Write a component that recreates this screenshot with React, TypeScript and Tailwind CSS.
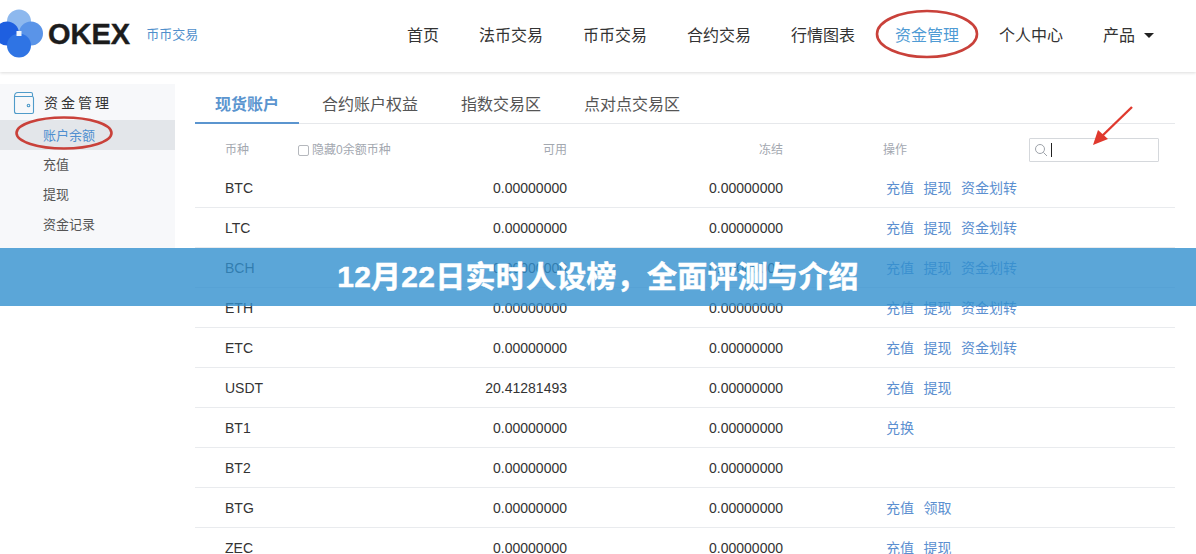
const FONT = '"Liberation Sans","Noto Sans CJK SC",sans-serif';

const nav = ["首页", "法币交易", "币币交易", "合约交易", "行情图表", "资金管理", "个人中心"];

const rows: [string, string, string[]][] = [
  ["BTC", "0.00000000", ["充值", "提现", "资金划转"]],
  ["LTC", "0.00000000", ["充值", "提现", "资金划转"]],
  ["BCH", "0.00000000", ["充值", "提现", "资金划转"]],
  ["ETH", "0.00000000", ["充值", "提现", "资金划转"]],
  ["ETC", "0.00000000", ["充值", "提现", "资金划转"]],
  ["USDT", "20.41281493", ["充值", "提现"]],
  ["BT1", "0.00000000", ["兑换"]],
  ["BT2", "0.00000000", []],
  ["BTG", "0.00000000", ["充值", "领取"]],
  ["ZEC", "0.00000000", ["充值", "提现"]],
];

function Logo() {
  return (
    <svg width="44" height="50" viewBox="0 0 44 50" className="-mt-[4px] shrink-0">
      <circle cx="19" cy="12.5" r="12" fill="#8db8ee" />
      <circle cx="31" cy="24.5" r="12" fill="#5a94e8" />
      <circle cx="7" cy="24.5" r="12" fill="#1e5fe0" />
      <circle cx="19" cy="36.5" r="12" fill="#2f74e4" />
      <rect x="16.5" y="22" width="5" height="5" fill="#eef4fd" />
    </svg>
  );
}

function Wallet() {
  return (
    <svg width="22" height="24" viewBox="0 0 22 24" fill="none" stroke="#4f9bc9" strokeWidth="1.1">
      <path d="M1.5 5.5 V20.5 a2 2 0 0 0 2 2 H19 a1.5 1.5 0 0 0 1.5-1.5 V7 a1.5 1.5 0 0 0-1.5-1.5 H1.5Z" />
      <path d="M1.5 5.5 C1.5 3 2.5 1.5 5 1.5 H18 a1.5 1.5 0 0 1 1.5 1.5 V5.5" />
      <circle cx="15.5" cy="14.5" r="1.3" />
    </svg>
  );
}

function Row({ row }: { row: [string, string, string[]] }) {
  return (
    <div className="flex h-10 items-center border-b border-[#e9ebee] pt-[1px] text-[14px] text-[#333]">
      <div className="w-[30px]" />
      <div className="w-[100px]">{row[0]}</div>
      <div className="w-[242px] text-right">{row[1]}</div>
      <div className="w-[216px] text-right">0.00000000</div>
      <div className="ml-[103px] flex gap-[9.5px] text-[#5b8fd0]">
        {row[2].map((a) => (
          <span key={a}>{a}</span>
        ))}
      </div>
    </div>
  );
}

export default function App() {
  return (
    <div className="relative h-[554px] w-[1196px] overflow-hidden bg-white" style={{ fontFamily: FONT }}>
      <header className="flex h-[72px] items-center shadow-[0_1px_3px_rgba(0,0,0,0.14)]">
        <div className="flex w-[407px] shrink-0 items-center">
          <Logo />
          <span className="mb-[2px] ml-[4px] text-[29px] font-bold tracking-[0px] text-[#1c1c1c] [-webkit-text-stroke:0.4px_#1c1c1c]">OKEX</span>
          <span className="mb-[2px] ml-[16px] text-[13px] text-[#4f8fcb]">币币交易</span>
        </div>
        <nav className="flex items-center gap-[40px] pb-[1px] text-[16px] text-[#333]">
          {nav.map((n) => (
            <span key={n} className={n === "资金管理" ? "text-[#4f9bd4]" : ""}>
              {n}
            </span>
          ))}
          <span className="flex items-center gap-[9px]">
            产品
            <span className="h-0 w-0 border-x-[5px] border-t-[5px] border-x-transparent border-t-[#222]" />
          </span>
        </nav>
      </header>

      <div className="mt-[12px] flex">
        <aside className="h-[164px] w-[175px] shrink-0 bg-[#f7f8fa]">
          <div className="flex h-[36px] items-center gap-[9px] pl-[13px] pt-[2px] text-[14px] tracking-[3px] text-[#333]">
            <Wallet />
            资金管理
          </div>
          <div className="flex h-[30px] items-center bg-[#e3e6ea] pl-[43px] pt-[1px] text-[13px] text-[#4f8fd0]">账户余额</div>
          {["充值", "提现", "资金记录"].map((s) => (
            <div key={s} className="flex h-[30px] items-center pl-[43px] text-[13px] text-[#555]">
              {s}
            </div>
          ))}
        </aside>

        <main className="ml-[20px] w-[980px]">
          <div className="flex h-[40px] items-end border-b border-[#e6e8eb] text-[16px] text-[#555]">
            <div className="-mb-px flex h-[40px] w-[104px] items-center justify-center border-b-2 border-[#5b95cf] pt-[4px] font-bold text-[#5b95cf]">
              现货账户
            </div>
            <div className="flex h-[40px] items-center gap-[43px] pl-[23px] pt-[4px]">
              <span>合约账户权益</span>
              <span>指数交易区</span>
              <span>点对点交易区</span>
            </div>
          </div>

          <div className="relative flex h-[44px] items-center pt-[8px] text-[12px] text-[#a3a8b0]">
            <div className="w-[30px]" />
            <div className="w-[73px]">币种</div>
            <div className="flex w-[170px] items-center gap-[3px]">
              <span className="h-[11px] w-[11px] rounded-[2px] border border-[#b5b8bd]" />
              隐藏0余额币种
            </div>
            <div className="w-[99px] text-right">可用</div>
            <div className="w-[216px] text-right">冻结</div>
            <div className="ml-[100px]">操作</div>
            <div className="ml-[122px] flex h-[24px] w-[130px] items-center gap-[3px] rounded-[1px] border border-[#d5d8dc] pl-[4px]">
              <svg width="14" height="14" viewBox="0 0 14 14" fill="none" stroke="#9ea3aa" strokeWidth="1">
                <circle cx="6" cy="6" r="4.5" />
                <path d="M9.4 9.4 L13 13" />
              </svg>
              <span className="h-[14px] w-px bg-[#222]" />
            </div>
          </div>

          {rows.map((r) => (
            <Row key={r[0]} row={r} />
          ))}
        </main>
      </div>

      <svg className="absolute left-0 top-0" width="1196" height="200" viewBox="0 0 1196 200" fill="none">
        <ellipse cx="927" cy="34" rx="50" ry="23" stroke="#c9413a" strokeWidth="2.6" />
        <ellipse cx="64" cy="133" rx="47.5" ry="15.5" stroke="#c9413a" strokeWidth="2.6" />
        <path d="M1132 107 L1100 138" stroke="#e0392e" strokeWidth="2.4" />
        <path d="M1093 145 L1098 130 L1108 139Z" fill="#e0392e" />
      </svg>

      <div className="absolute left-0 top-[248px] flex h-[58px] w-full items-center justify-center bg-[#3290ce]/80 pb-[1px] text-[30px] font-bold leading-none tracking-[0.25px] text-white [-webkit-text-stroke:0.5px_white]">
        12月22日实时人设榜，全面评测与介绍
      </div>
    </div>
  );
}
